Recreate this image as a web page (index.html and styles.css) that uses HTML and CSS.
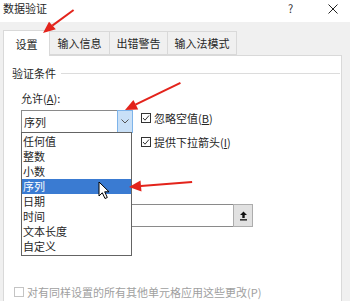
FILE: index.html
```html
<!DOCTYPE html>
<html lang="zh-CN">
<head>
<meta charset="utf-8">
<title>数据验证</title>
<link rel="stylesheet" href="styles.css">
</head>
<body>
<div class="dialog">
  <div class="titlebar">
    <span class="title">数据验证</span>
    <span class="help">?</span>
    <svg class="close" width="10" height="10" viewBox="0 0 10 10"><path d="M0.5 0.5L9.5 9.5M9.5 0.5L0.5 9.5" stroke="#222" stroke-width="1"/></svg>
  </div>
  <div class="main">
    <div class="tabs">
      <div class="tab tab-active">设置</div>
      <div class="tab">输入信息</div>
      <div class="tab">出错警告</div>
      <div class="tab">输入法模式</div>
    </div>
    <div class="panel">
      <div class="group-title"><span>验证条件</span><i class="rule"></i></div>
      <div class="label">允许(<u>A</u>):</div>
      <div class="row">
        <div class="select-wrap">
          <div class="select">
            <span class="select-text">序列</span>
            <span class="select-btn">
              <svg width="8" height="5" viewBox="0 0 8 5"><path d="M0.5 0.5L4 4L7.5 0.5" fill="none" stroke="#555" stroke-width="1"/></svg>
            </span>
          </div>
          <ul class="droplist">
            <li>任何值</li>
            <li>整数</li>
            <li>小数</li>
            <li class="selected">序列</li>
            <li>日期</li>
            <li>时间</li>
            <li>文本长度</li>
            <li>自定义</li>
          </ul>
        </div>
        <div class="checks">
          <div class="check"><span class="box"><svg width="8" height="8" viewBox="0 0 8 8"><path d="M1 4L3 6.2L7 1.5" fill="none" stroke="#333" stroke-width="1"/></svg></span><span>忽略空值(<u>B</u>)</span></div>
          <div class="check"><span class="box"><svg width="8" height="8" viewBox="0 0 8 8"><path d="M1 4L3 6.2L7 1.5" fill="none" stroke="#333" stroke-width="1"/></svg></span><span>提供下拉箭头(<u>I</u>)</span></div>
        </div>
      </div>
      <div class="source">
        <div class="source-input"></div>
        <div class="source-btn">
          <svg width="9" height="10" viewBox="0 0 9 10"><path d="M4.5 0.5L8 4H5.7V7H3.3V4H1Z" fill="#111"/><rect x="1" y="8.2" width="7" height="1.3" fill="#111"/></svg>
        </div>
      </div>
      <div class="apply"><span class="box box-disabled"></span><span>对有同样设置的所有其他单元格应用这些更改(P)</span></div>
    </div>
  </div>
  <svg class="annot" width="350" height="301" viewBox="0 0 350 301">
    <g fill="#e3231b" stroke="none">
      <path d="M73 9.2L74.2 10.8L52.9 26.4L51.7 24.8Z"/>
      <polygon points="43,33 55.8,29.3 49,21.8"/>
      <path d="M180 82L180.9 83.8L135.9 105.6L135 103.8Z"/>
      <polygon points="125,110 138.2,109.4 133.4,100"/>
      <path d="M192 181L192.2 183L141 187L140.8 185Z"/>
      <polygon points="129,187 141.5,191.5 140.5,180.5"/>
    </g>
    <polygon points="99,182 99,196 102.3,192.8 105,198.5 107.3,197.5 104.7,191.8 109,191.8" fill="#fff" stroke="#000" stroke-width="1" stroke-linejoin="round"/>
  </svg>
</div>
</body>
</html>
```

FILE: styles.css
```css
* { box-sizing: border-box; }
html, body { margin: 0; padding: 0; }
body {
  width: 350px;
  height: 301px;
  overflow: hidden;
  background: #f0f0f0;
  font-family: "Noto Sans CJK SC", "Noto Sans", "DejaVu Sans", sans-serif;
  font-size: 11px;
  color: #262626;
}
.dialog { position: relative; width: 350px; height: 301px; overflow: hidden; }
.titlebar {
  height: 22px;
  background: #fff;
  display: flex;
  align-items: flex-start;
  padding: 1px 0 0 3px;
}
.title { line-height: 14px; flex: 1; }
.help { line-height: 14px; width: 8px; margin-right: 32px; color: #333; }
.close { margin-top: 3px; margin-right: 12px; }
.main {
  padding: 8px 8px 0 3px;
  height: 279px;
}
.tabs { display: flex; height: 25px; position: relative; z-index: 1; }
.tab {
  height: 24px;
  margin-top: 1px;
  border: 1px solid #d9d9d9;
  border-left: none;
  background: #f0f0f0;
  display: flex;
  align-items: center;
  justify-content: center;
  line-height: 14px;
}
.tab:nth-child(1) { width: 47px; }
.tab:nth-child(2) { width: 60px; }
.tab:nth-child(3) { width: 58px; }
.tab:nth-child(4) { width: 69px; }
.tab-active {
  background: #fff;
  border-left: 1px solid #d9d9d9;
  border-bottom: none;
  height: 26px;
  margin-top: 0;
}
.panel {
  position: relative;
  background: #fff;
  border: 1px solid #d9d9d9;
  height: 260px;
  padding: 0 1px 0 4px;
}
.group-title {
  display: flex;
  align-items: center;
  margin-top: 10px;
  line-height: 14px;
  padding-left: 4px;
}
.rule { flex: 1; height: 1px; background: #dcdcdc; margin-left: 5px; }
.label { line-height: 14px; margin: 11px 0 0 13px; }
.row { display: flex; margin: 5px 0 0 13px; height: 39px; }
.select-wrap { position: relative; width: 112px; height: 23px; }
.select {
  width: 112px;
  height: 23px;
  border: 1px solid #8a8a8a;
  display: flex;
  align-items: center;
  background: #fff;
}
.select-text { flex: 1; padding-left: 2px; line-height: 14px; }
.select-btn {
  width: 16px;
  height: 23px;
  margin: -1px -1px -1px 0;
  background: #c9e0f7;
  border: 1px solid #7eb4ea;
  display: flex;
  align-items: center;
  justify-content: center;
}
.droplist {
  position: absolute;
  left: 0;
  top: 22px;
  width: 111px;
  height: 124px;
  margin: 0;
  padding: 1px 0 0;
  list-style: none;
  background: #fff;
  border: 1px solid #646464;
  z-index: 2;
}
.droplist li { height: 15px; line-height: 15px; padding-left: 1px; }
.droplist li.selected { background: #3a7bd2; color: #fff; }
.checks { display: flex; flex-direction: column; margin-left: 8px; padding-top: 1px; gap: 10px; }
.check { display: flex; align-items: center; height: 14px; line-height: 14px; }
.box {
  width: 10px;
  height: 10px;
  border: 1px solid #333;
  margin-right: 3px;
  display: flex;
  align-items: center;
  justify-content: center;
  background: #fff;
}
.source { display: flex; margin: 55px 0 0 13px; height: 23px; }
.source-input { width: 212px; height: 23px; border: 1px solid #8a8a8a; border-right: none; }
.source-btn {
  width: 20px;
  height: 23px;
  background: #e1e1e1;
  border: 1px solid #adadad;
  display: flex;
  align-items: center;
  justify-content: center;
}
.apply { display: flex; align-items: center; margin: 58px 0 0 6px; line-height: 14px; color: #a0a0a0; }
.box-disabled { border-color: #c4c4c4; }
.annot { position: absolute; left: 0; top: 0; pointer-events: none; z-index: 5; }
```
